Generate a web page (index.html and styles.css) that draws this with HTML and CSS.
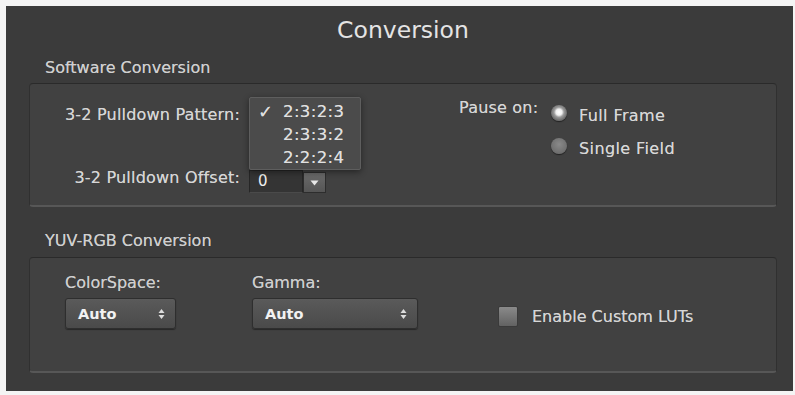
FILE: index.html
```html
<!DOCTYPE html>
<html>
<head>
  <meta charset="utf-8"/>
  <title>Conversion</title>
  <link rel="stylesheet" href="styles.css">
</head>
<body>
  <div class="window">
    <h1 class="title">Conversion</h1>

    <div class="section-label">Software Conversion</div>
    <div class="group group-software">
      <div class="pulldown">
        <div class="field-label">3-2 Pulldown Pattern:</div>
        <div class="menu-anchor">
          <ul class="popup-menu">
            <li class="checked"><span class="check">&#10003;</span>2:3:2:3</li>
            <li>2:3:3:2</li>
            <li>2:2:2:4</li>
          </ul>
        </div>

        <div class="field-label offset-label">3-2 Pulldown Offset:</div>
        <div class="stepper">
          <div class="stepper-value">0</div>
          <div class="stepper-btn">
            <svg width="9" height="6" viewBox="0 0 9 6"><path d="M0.5 0.5 L8.5 0.5 L4.5 5.5 Z" fill="#e8e8e8"/></svg>
          </div>
        </div>
      </div>

      <div class="pause">
        <div class="field-label pause-label">Pause on:</div>
        <div class="radios">
          <label class="radio-row"><span class="radio on"></span><span class="radio-text">Full Frame</span></label>
          <label class="radio-row"><span class="radio"></span><span class="radio-text">Single Field</span></label>
        </div>
      </div>
    </div>

    <div class="section-label section-yuv">YUV-RGB Conversion</div>
    <div class="group group-yuv">
      <div class="select-field">
        <div class="small-label">ColorSpace:</div>
        <div class="select select-narrow">
          <span>Auto</span>
          <svg width="7" height="12" viewBox="0 0 7 12"><path d="M0.5 5 L3.5 1 L6.5 5 Z M0.5 7 L3.5 11 L6.5 7 Z" fill="#ddd"/></svg>
        </div>
      </div>
      <div class="select-field">
        <div class="small-label">Gamma:</div>
        <div class="select select-wide">
          <span>Auto</span>
          <svg width="7" height="12" viewBox="0 0 7 12"><path d="M0.5 5 L3.5 1 L6.5 5 Z M0.5 7 L3.5 11 L6.5 7 Z" fill="#ddd"/></svg>
        </div>
      </div>
      <label class="checkbox-row"><span class="checkbox"></span>Enable Custom LUTs</label>
    </div>
  </div>
</body>
</html>
```

FILE: styles.css
```css
html, body {
  margin: 0;
  padding: 0;
  background: #f4f4f4;
}
body {
  padding: 6px 2px 4px 6px;
  font-family: "DejaVu Sans", "Liberation Sans", sans-serif;
}
.window {
  height: 385px;
  background: #3b3b3b;
  padding: 0 16px 0 23px;
  box-sizing: border-box;
  overflow: hidden;
}
.title {
  margin: 0;
  padding-top: 10px;
  height: 40px;
  box-sizing: border-box;
  text-align: center;
  font-size: 23.5px;
  font-weight: normal;
  line-height: 28px;
  color: #e4e4e4;
}
.section-label {
  padding-left: 16px;
  font-size: 16px;
  line-height: 20px;
  color: #d0d0d0;
  margin: 12px 0 5px;
  text-shadow: 0 0 0.6px rgba(220, 220, 220, 0.7);
}
.section-yuv {
  margin: 24px 0 6px;
}
.group {
  background: #414141;
  border-top: 1px solid #2a2a2a;
  border-left: 1px solid #303030;
  border-right: 1px solid #303030;
  border-bottom: 2px solid #575757;
  border-radius: 4px;
}

/* software conversion */
.group-software {
  height: 124px;
  box-sizing: border-box;
  display: flex;
}
.pulldown {
  display: grid;
  grid-template-columns: 210px 112px;
  grid-template-rows: 86px 23px;
  column-gap: 9px;
  align-items: start;
}
.field-label {
  font-size: 16px;
  color: #d6d6d6;
  text-align: right;
  line-height: 20px;
  white-space: nowrap;
  letter-spacing: 0.2px;
  text-shadow: 0 0 0.6px rgba(220, 220, 220, 0.7);
}
.pulldown .field-label {
  padding-top: 21px;
}
.pulldown .offset-label {
  padding-top: 0;
  margin-top: -2px;
}
.menu-anchor {
  position: relative;
}
.popup-menu {
  position: absolute;
  left: 0;
  top: 13px;
  width: 112px;
  height: 73px;
  box-sizing: border-box;
  margin: 0;
  padding: 2px 0 0 0;
  list-style: none;
  background: #4b4b4b;
  border: 1px solid #5e5e5e;
  border-radius: 2px;
  box-shadow: 0 2px 6px rgba(0, 0, 0, 0.45);
  z-index: 2;
}
.popup-menu li {
  height: 23px;
  line-height: 23px;
  padding-left: 33px;
  font-size: 16.5px;
  letter-spacing: 0.4px;
  color: #e0e0e0;
  position: relative;
  text-shadow: 0 0 0.6px rgba(220, 220, 220, 0.7);
}
.popup-menu .check {
  position: absolute;
  left: 8px;
  top: 0;
  font-size: 18px;
  letter-spacing: 0;
}
.stepper {
  display: flex;
  height: 23px;
}
.stepper-value {
  width: 54px;
  box-sizing: border-box;
  background: #343434;
  border: 1px solid #262626;
  border-bottom-color: #4a4a4a;
  color: #f0f0f0;
  font-size: 15px;
  line-height: 21px;
  padding-left: 8px;
}
.stepper-btn {
  width: 23px;
  height: 21px;
  margin-top: 2px;
  box-sizing: border-box;
  background: linear-gradient(#6a6a6a, #555);
  border: 1px solid #2d2d2d;
  display: flex;
  align-items: center;
  justify-content: center;
}
.pause {
  display: flex;
  margin-left: 98px;
  padding-top: 14px;
}
.pause-label {
  width: 92px;
  text-align: left;
}
.radios {
  display: flex;
  flex-direction: column;
  gap: 13px;
  margin-top: 5px;
}
.radio-row {
  display: flex;
  align-items: center;
  gap: 12px;
  font-size: 16px;
  color: #d8d8d8;
  height: 20px;
  text-shadow: 0 0 0.6px rgba(220, 220, 220, 0.7);
}
.radio-text {
  padding-top: 4px;
  letter-spacing: 0.4px;
}
.radio {
  width: 16px;
  height: 16px;
  border-radius: 50%;
  background: radial-gradient(circle at 50% 40%, #8a8a8a, #626262);
  box-shadow: 0 1px 1px rgba(0, 0, 0, 0.5);
}
.radio.on {
  background: radial-gradient(circle at 50% 45%, #ffffff 0, #f0f0f0 3px, #9a9a9a 5px, #6e6e6e 8px);
}

/* yuv-rgb conversion */
.group-yuv {
  height: 116px;
  box-sizing: border-box;
  display: flex;
  align-items: flex-start;
  padding: 15px 0 0 35px;
}
.select-field {
  display: flex;
  flex-direction: column;
  gap: 5px;
}
.select-field + .select-field {
  margin-left: 76px;
}
.small-label {
  font-size: 16px;
  line-height: 20px;
  color: #cfcfcf;
  text-shadow: 0 0 0.6px rgba(220, 220, 220, 0.7);
}
.select {
  height: 31px;
  box-sizing: border-box;
  display: flex;
  align-items: center;
  justify-content: space-between;
  padding: 0 10px 0 12px;
  background: linear-gradient(#5a5a5a, #4a4a4a);
  border: 1px solid #2e2e2e;
  border-radius: 3px;
  box-shadow: 0 1px 1px rgba(0, 0, 0, 0.4);
  font-size: 14.5px;
  font-weight: bold;
  color: #f2f2f2;
}
.select-narrow {
  width: 111px;
}
.select-wide {
  width: 166px;
}
.checkbox-row {
  display: flex;
  align-items: center;
  gap: 14px;
  margin: 33px 0 0 80px;
  font-size: 16px;
  color: #d6d6d6;
  text-shadow: 0 0 0.6px rgba(220, 220, 220, 0.7);
}
.checkbox {
  width: 20px;
  height: 21px;
  box-sizing: border-box;
  border-radius: 2px;
  background: linear-gradient(#8a8a8a, #626262);
  border: 1px solid #3a3a3a;
}
```
